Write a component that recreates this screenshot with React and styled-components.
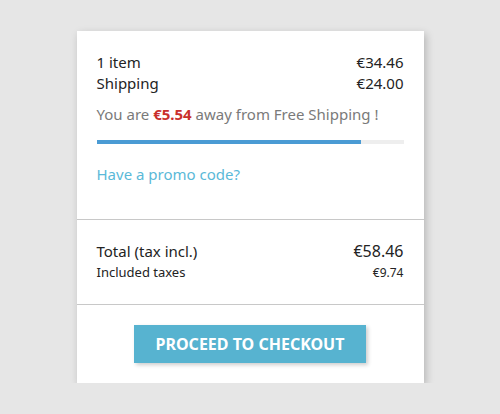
import React from 'react'
import styled, { createGlobalStyle } from 'styled-components'

const GlobalStyle = createGlobalStyle`
  body {
    margin: 0;
    background: #e6e6e6;
    font-family: "Noto Sans", "Open Sans", sans-serif;
    color: #232323;
  }
`

const App = () => {
  return (
    <Page>
      <GlobalStyle />
      <Card>
        <Block>
          <Line>
            <span>1 item</span>
            <span>€34.46</span>
          </Line>
          <Line>
            <span>Shipping</span>
            <span>€24.00</span>
          </Line>
          <FreeShipping>
            You are <Amount>€5.54</Amount> away from Free Shipping !
          </FreeShipping>
          <Progress>
            <ProgressFill style={{ width: '86%' }} />
          </Progress>
          <PromoLink href="#">Have a promo code?</PromoLink>
        </Block>

        <Totals>
          <Line>
            <span>Total (tax incl.)</span>
            <TotalValue>€58.46</TotalValue>
          </Line>
          <Line small>
            <span>Included taxes</span>
            <TaxValue>€9.74</TaxValue>
          </Line>
        </Totals>

        <Footer>
          <CheckoutButton>Proceed to checkout</CheckoutButton>
        </Footer>
      </Card>
    </Page>
  )
}

export default App


const Page = styled.div`
  padding-top: 31px;
  display: flex;
  justify-content: center;
`

const Card = styled.div`
  width: 347px;
  background: #fff;
  box-shadow: 2px 3px 8px rgba(0, 0, 0, 0.22);
`

const Block = styled.div`
  padding: 21px 20px 34px;
  display: flex;
  flex-direction: column;
`

const Line = styled.div`
  display: flex;
  justify-content: space-between;
  align-items: baseline;
  font-size: ${p => (p.small ? '13px' : '15px')};
  line-height: ${p => (p.small ? '20px' : '21px')};
`

const FreeShipping = styled.div`
  margin-top: 10px;
  font-size: 15px;
  line-height: 21px;
  color: #7a7a7a;
`

const Amount = styled.strong`
  color: #c9302c;
  font-weight: 700;
`

const Progress = styled.div`
  margin-top: 15px;
  height: 4px;
  background: #eeeeee;
`

const ProgressFill = styled.div`
  height: 100%;
  background: #4a9bd4;
`

const PromoLink = styled.a`
  margin-top: 20px;
  font-size: 15px;
  line-height: 21px;
  color: #5ab9d8;
  text-decoration: none;
`

const Totals = styled.div`
  border-top: 1px solid #c8c8c8;
  padding: 21px 20px 21px;
`

const TotalValue = styled.span`
  font-size: 16px;
`

const TaxValue = styled.span`
  font-size: 12px;
`

const Footer = styled.div`
  border-top: 1px solid #c8c8c8;
  padding: 20px;
  display: flex;
  justify-content: center;
`

const CheckoutButton = styled.button`
  width: 232px;
  height: 38px;
  border: none;
  background: #57b3d0;
  color: #fff;
  font-family: "Noto Sans", "Open Sans", sans-serif;
  font-size: 16px;
  font-weight: 700;
  text-transform: uppercase;
  box-shadow: 2px 2px 4px rgba(0, 0, 0, 0.2);
  cursor: pointer;
`
